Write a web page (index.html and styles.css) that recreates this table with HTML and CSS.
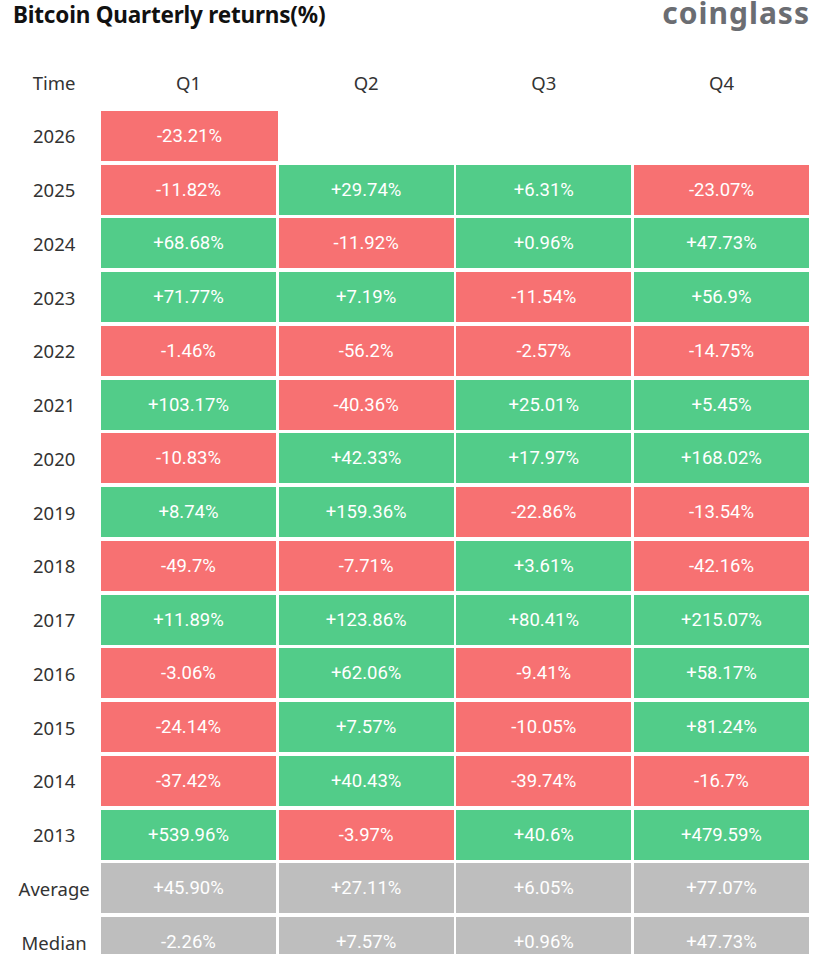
FILE: index.html
```html
<!DOCTYPE html>
<html lang="en">
<head>
<meta charset="utf-8">
<title>Bitcoin Quarterly returns(%)</title>
<link rel="stylesheet" href="styles.css">
</head>
<body>
<div class="page">
  <header class="top">
    <h1 class="title">Bitcoin Quarterly returns(%)</h1>
    <div class="logo">coinglass</div>
  </header>
  <div class="grid">
    <div class="lbl">Time</div><div class="hd">Q1</div><div class="hd">Q2</div><div class="hd">Q3</div><div class="hd">Q4</div>

    <div class="lbl">2026</div><div class="c neg wide">-23.21%</div><div></div><div></div><div></div>
    <div class="lbl">2025</div><div class="c neg">-11.82%</div><div class="c pos">+29.74%</div><div class="c pos">+6.31%</div><div class="c neg">-23.07%</div>
    <div class="lbl">2024</div><div class="c pos">+68.68%</div><div class="c neg">-11.92%</div><div class="c pos">+0.96%</div><div class="c pos">+47.73%</div>
    <div class="lbl">2023</div><div class="c pos">+71.77%</div><div class="c pos">+7.19%</div><div class="c neg">-11.54%</div><div class="c pos">+56.9%</div>
    <div class="lbl">2022</div><div class="c neg">-1.46%</div><div class="c neg">-56.2%</div><div class="c neg">-2.57%</div><div class="c neg">-14.75%</div>
    <div class="lbl">2021</div><div class="c pos">+103.17%</div><div class="c neg">-40.36%</div><div class="c pos">+25.01%</div><div class="c pos">+5.45%</div>
    <div class="lbl">2020</div><div class="c neg">-10.83%</div><div class="c pos">+42.33%</div><div class="c pos">+17.97%</div><div class="c pos">+168.02%</div>
    <div class="lbl">2019</div><div class="c pos">+8.74%</div><div class="c pos">+159.36%</div><div class="c neg">-22.86%</div><div class="c neg">-13.54%</div>
    <div class="lbl">2018</div><div class="c neg">-49.7%</div><div class="c neg">-7.71%</div><div class="c pos">+3.61%</div><div class="c neg">-42.16%</div>
    <div class="lbl">2017</div><div class="c pos">+11.89%</div><div class="c pos">+123.86%</div><div class="c pos">+80.41%</div><div class="c pos">+215.07%</div>
    <div class="lbl">2016</div><div class="c neg">-3.06%</div><div class="c pos">+62.06%</div><div class="c neg">-9.41%</div><div class="c pos">+58.17%</div>
    <div class="lbl">2015</div><div class="c neg">-24.14%</div><div class="c pos">+7.57%</div><div class="c neg">-10.05%</div><div class="c pos">+81.24%</div>
    <div class="lbl">2014</div><div class="c neg">-37.42%</div><div class="c pos">+40.43%</div><div class="c neg">-39.74%</div><div class="c neg">-16.7%</div>
    <div class="lbl">2013</div><div class="c pos">+539.96%</div><div class="c neg">-3.97%</div><div class="c pos">+40.6%</div><div class="c pos">+479.59%</div>
    <div class="lbl">Average</div><div class="c avg">+45.90%</div><div class="c avg">+27.11%</div><div class="c avg">+6.05%</div><div class="c avg">+77.07%</div>
    <div class="lbl">Median</div><div class="c avg">-2.26%</div><div class="c avg">+7.57%</div><div class="c avg">+0.96%</div><div class="c avg">+47.73%</div>
  </div>
</div>
</body>
</html>
```

FILE: styles.css
```css
html, body {
  margin: 0;
  padding: 0;
  background: #ffffff;
}
body {
  width: 827px;
  height: 954px;
  overflow: hidden;
}
.page {
  width: 827px;
}
.top {
  display: flex;
  justify-content: space-between;
  align-items: flex-start;
  height: 57px;
  padding: 0 18px 0 13px;
  box-sizing: border-box;
}
.title {
  margin: 0;
  padding-top: 1px;
  font-family: "Noto Sans", "Open Sans", sans-serif;
  font-weight: 700;
  font-size: 22.5px;
  line-height: 28px;
  color: #111111;
  letter-spacing: -0.2px;
}
.logo {
  padding-top: 2px;
  font-family: "Noto Sans", "Open Sans", sans-serif;
  font-weight: 700;
  font-size: 30px;
  line-height: 22px;
  color: #6b6d72;
  letter-spacing: 1px;
  margin-right: -1px;
}
.grid {
  display: grid;
  grid-template-columns: 88.33px repeat(4, 175px);
  grid-auto-rows: 50px;
  column-gap: 2.67px;
  row-gap: 3.75px;
  padding-left: 10px;
}
.lbl, .hd {
  display: flex;
  align-items: center;
  justify-content: center;
  font-family: "Noto Sans", "Open Sans", sans-serif;
  font-size: 18.5px;
  color: #333333;
}
.c {
  display: flex;
  align-items: center;
  justify-content: center;
  font-family: Roboto, "Liberation Sans", sans-serif;
  font-size: 18.5px;
  color: #ffffff;
}
.wide {
  margin-right: -2px;
}
.pos {
  background: #52cc89;
}
.neg {
  background: #f77172;
}
.avg {
  background: #bebebe;
}
```
